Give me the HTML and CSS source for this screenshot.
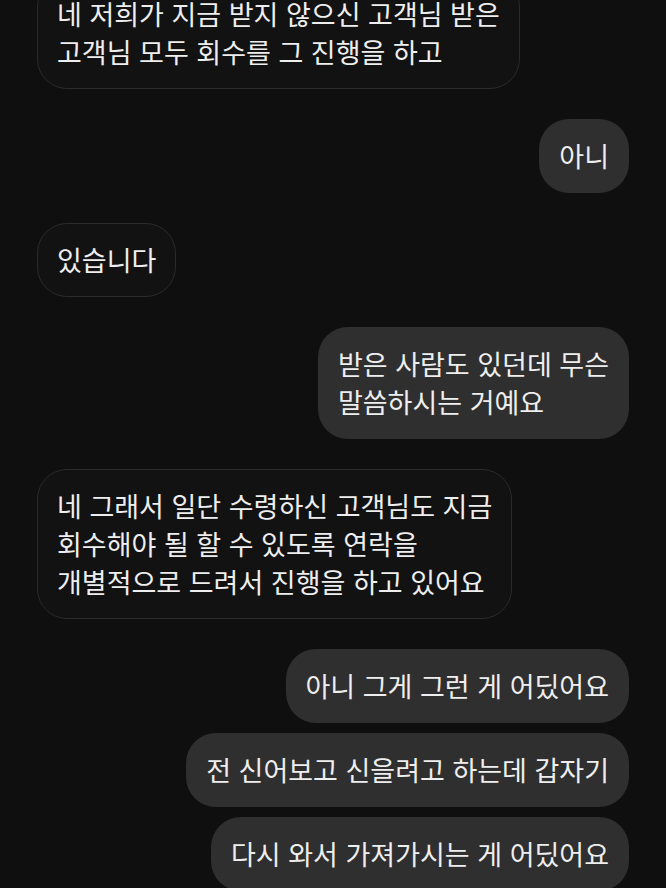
FILE: index.html
```html
<!DOCTYPE html>
<html lang="ko">
<head>
  <meta charset="UTF-8" />
  <meta name="viewport" content="width=device-width, initial-scale=1" />
  <title>메시지</title>
  <link rel="stylesheet" href="styles.css">
</head>
<body>
  <main class="thread">
    <div class="msg received">네 저희가 지금 받지 않으신 고객님 받은<br>고객님 모두 회수를 그 진행을 하고</div>
    <div class="msg sent">아니</div>
    <div class="msg received">있습니다</div>
    <div class="msg sent">받은 사람도 있던데 무슨<br>말씀하시는 거예요</div>
    <div class="msg received">네 그래서 일단 수령하신 고객님도 지금<br>회수해야 될 할 수 있도록 연락을<br>개별적으로 드려서 진행을 하고 있어요</div>
    <div class="msg sent">아니 그게 그런 게 어딨어요</div>
    <div class="msg sent cont">전 신어보고 신을려고 하는데 갑자기</div>
    <div class="msg sent cont">다시 와서 가져가시는 게 어딨어요</div>
  </main>
</body>
</html>
```

FILE: styles.css
```css
html, body {
  margin: 0;
  padding: 0;
  background: #0f0f0f;
  overflow: hidden;
}
body {
  font-family: "Noto Sans CJK KR", "Noto Sans", sans-serif;
  color: #eeeeee;
  height: 888px;
}
.thread {
  display: flex;
  flex-direction: column;
  padding: 0 37px;
  margin-top: -23px;
}
.msg {
  font-size: 27px;
  line-height: 38px;
  padding: 18px 20px;
  border-radius: 30px;
  margin-top: 30px;
  white-space: nowrap;
}
.msg:first-child {
  margin-top: 0;
}
.msg.cont {
  margin-top: 10px;
}
.received {
  align-self: flex-start;
  background: #121212;
  border: 1px solid #2b2b2b;
  padding: 17px 19px;
}
.sent {
  align-self: flex-end;
  background: #2f2f2f;
}
```
